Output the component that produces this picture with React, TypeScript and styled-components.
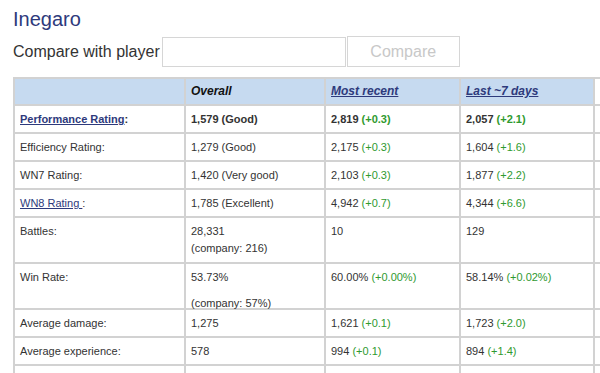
import React from 'react'
import styled, { createGlobalStyle } from 'styled-components'

const Global = createGlobalStyle`
  html, body {
    margin: 0;
    padding: 0;
    background: #fff;
    overflow: hidden;
  }
  body {
    font-family: "Liberation Sans", Arial, sans-serif;
    color: #333;
  }
`;

const Page = styled.div`
  padding: 8px 0 0 13px;
  width: 760px;
`;

const Name = styled.h1`
  margin: 0;
  font-size: 20px;
  line-height: 23px;
  font-weight: normal;
  color: #2e3a7c;
`;

const CompareRow = styled.form`
  display: flex;
  align-items: center;
  margin-top: 5px;
  height: 31px;
`;

const CompareLabel = styled.span`
  font-size: 16px;
  color: #333;
  margin-right: 2px;
`;

const PlayerInput = styled.input`
  box-sizing: border-box;
  width: 184px;
  height: 30px;
  border: 1px solid #d6d6d6;
  background: #fff;
  margin: 0;
  outline: none;
`;

const CompareButton = styled.button`
  box-sizing: border-box;
  width: 113px;
  height: 31px;
  margin: 0 0 0 1px;
  border: 1px solid #d6d6d6;
  background: #fff;
  color: #c8c8c8;
  font-family: "Liberation Sans", Arial, sans-serif;
  font-size: 16px;
  padding: 0;
`;

const Table = styled.table`
  margin-top: 10px;
  border-collapse: separate;
  border-spacing: 0;
  table-layout: fixed;
  border-top: 2px solid #d2d2d2;
  border-left: 2px solid #d2d2d2;
  font-size: 11px;
  line-height: 17px;
`;

const Col = styled.col<{ w: number }>`
  width: ${({ w }) => w}px;
`;

const Head = styled.th<{ blank?: boolean }>`
  box-sizing: border-box;
  height: 27px;
  padding: 4px 5px;
  text-align: left;
  vertical-align: top;
  background: ${({ blank }) => (blank ? '#fff' : '#c6daf0')};
  border-right: 2px solid #d2d2d2;
  border-bottom: 2px solid #d2d2d2;
  font-size: 12px;
  font-weight: bold;
  font-style: italic;
  color: #111;
`;

const Cell = styled.td<{ tall?: boolean; strong?: boolean }>`
  box-sizing: border-box;
  height: ${({ tall }) => (tall ? 46 : 28)}px;
  padding: 5px 5px 4px;
  vertical-align: top;
  border-right: 2px solid #d2d2d2;
  border-bottom: 2px solid #d2d2d2;
  font-weight: ${({ strong }) => (strong ? 'bold' : 'normal')};
  color: #333;
  white-space: nowrap;
`;

const Link = styled.a`
  color: #2e3a7c;
  text-decoration: underline;
  cursor: pointer;
`;

const Delta = styled.span`
  color: #2f9a2f;
`;

/* second line of a cell; a gap pushes it down without growing the row */
const Extra = styled.div<{ gap?: number }>`
  margin-top: ${({ gap }) => gap ?? 0}px;
  margin-bottom: ${({ gap }) => -(gap ?? 0)}px;
`;

type Val = { main: string; delta?: string; extra?: string; gap?: number };

type Row = {
  label: React.ReactNode;
  strong?: boolean;
  tall?: boolean;
  values: Val[];
};

const rows: Row[] = [
  {
    label: (
      <>
        <Link>Performance Rating</Link>:
      </>
    ),
    strong: true,
    values: [
      { main: '1,579 (Good)' },
      { main: '2,819', delta: '(+0.3)' },
      { main: '2,057', delta: '(+2.1)' },
    ],
  },
  {
    label: 'Efficiency Rating:',
    values: [
      { main: '1,279 (Good)' },
      { main: '2,175', delta: '(+0.3)' },
      { main: '1,604', delta: '(+1.6)' },
    ],
  },
  {
    label: 'WN7 Rating:',
    values: [
      { main: '1,420 (Very good)' },
      { main: '2,103', delta: '(+0.3)' },
      { main: '1,877', delta: '(+2.2)' },
    ],
  },
  {
    label: (
      <>
        <Link>WN8 Rating </Link>:
      </>
    ),
    values: [
      { main: '1,785 (Excellent)' },
      { main: '4,942', delta: '(+0.7)' },
      { main: '4,344', delta: '(+6.6)' },
    ],
  },
  {
    label: 'Battles:',
    tall: true,
    values: [
      { main: '28,331', extra: '(company: 216)' },
      { main: '10' },
      { main: '129' },
    ],
  },
  {
    label: 'Win Rate:',
    tall: true,
    values: [
      { main: '53.73%', extra: '(company: 57%)', gap: 9 },
      { main: '60.00%', delta: '(+0.00%)' },
      { main: '58.14%', delta: '(+0.02%)' },
    ],
  },
  {
    label: 'Average damage:',
    values: [
      { main: '1,275' },
      { main: '1,621', delta: '(+0.1)' },
      { main: '1,723', delta: '(+2.0)' },
    ],
  },
  {
    label: 'Average experience:',
    values: [
      { main: '578' },
      { main: '994', delta: '(+0.1)' },
      { main: '894', delta: '(+1.4)' },
    ],
  },
  {
    label: '',
    values: [{ main: '' }, { main: '' }, { main: '' }],
  },
];

const App = () => {
  return (
    <Page>
      <Global />
      <Name>Inegaro</Name>
      <CompareRow onSubmit={(e) => e.preventDefault()}>
        <CompareLabel>Compare with player</CompareLabel>
        <PlayerInput type="text" />
        <CompareButton type="submit" disabled>
          Compare
        </CompareButton>
      </CompareRow>
      <Table>
        <colgroup>
          <Col w={171} />
          <Col w={140} />
          <Col w={135} />
          <Col w={134} />
          <Col w={140} />
        </colgroup>
        <thead>
          <tr>
            <Head></Head>
            <Head>Overall</Head>
            <Head>
              <Link>Most recent</Link>
            </Head>
            <Head>
              <Link>Last ~7 days</Link>
            </Head>
            <Head blank></Head>
          </tr>
        </thead>
        <tbody>
          {rows.map((row, i) => (
            <tr key={i}>
              <Cell strong={row.strong} tall={row.tall}>
                {row.label}
              </Cell>
              {row.values.map((v, j) => (
                <Cell key={j} strong={row.strong} tall={row.tall}>
                  {v.main}
                  {v.delta && (
                    <>
                      {' '}
                      <Delta>{v.delta}</Delta>
                    </>
                  )}
                  {v.extra && <Extra gap={v.gap}>{v.extra}</Extra>}
                </Cell>
              ))}
              <Cell tall={row.tall}></Cell>
            </tr>
          ))}
        </tbody>
      </Table>
    </Page>
  )
}

export default App
